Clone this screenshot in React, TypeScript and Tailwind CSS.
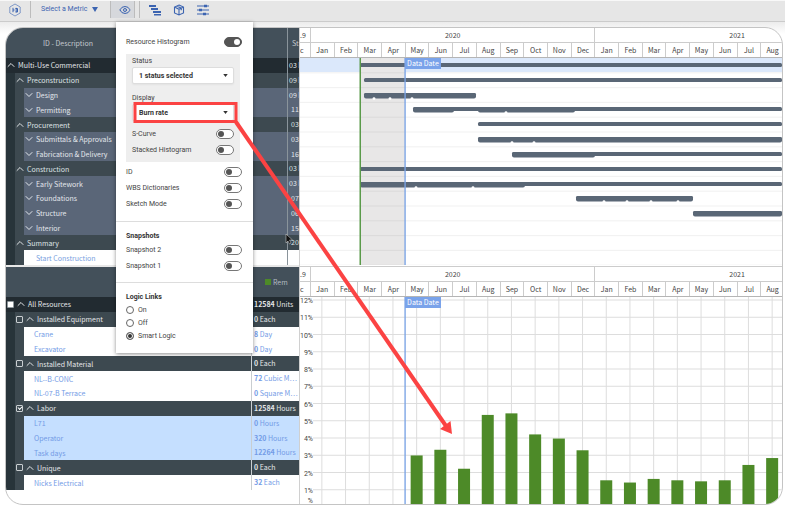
import { ChevronDown, ChevronUp, Eye } from 'lucide-react';
import { useState } from 'react';
import type { ReactNode } from 'react';

const MONTHS = ['Jan', 'Feb', 'Mar', 'Apr', 'May', 'Jun', 'Jul', 'Aug', 'Sep', 'Oct', 'Nov', 'Dec'];

type WbsRow = { name: string; level: number; date?: string; leaf?: boolean };

const WBS: WbsRow[] = [
	{ name: 'Multi-Use Commercial', level: 0, date: '03 M' },
	{ name: 'Preconstruction', level: 1, date: '09 M' },
	{ name: 'Design', level: 2, date: '09 M' },
	{ name: 'Permitting', level: 2, date: '11' },
	{ name: 'Procurement', level: 1, date: '03' },
	{ name: 'Submittals & Approvals', level: 2, date: '03' },
	{ name: 'Fabrication & Delivery', level: 2, date: '16' },
	{ name: 'Construction', level: 1, date: '03 M' },
	{ name: 'Early Sitework', level: 2, date: '03 M' },
	{ name: 'Foundations', level: 2, date: '07' },
	{ name: 'Structure', level: 2, date: '06' },
	{ name: 'Interior', level: 2, date: '15' },
	{ name: 'Summary', level: 1, date: '20' },
	{ name: 'Start Construction', level: 2, leaf: true }
];

type ResourceRow = {
	name: string;
	level: number;
	amount: string;
	unit: string;
	checked?: boolean;
	selected?: boolean;
};

const RESOURCES: ResourceRow[] = [
	{ name: 'All Resources', level: 0, amount: '12584', unit: 'Units' },
	{ name: 'Installed Equipment', level: 1, amount: '0', unit: 'Each' },
	{ name: 'Crane', level: 2, amount: '8', unit: 'Day' },
	{ name: 'Excavator', level: 2, amount: '0', unit: 'Day' },
	{ name: 'Installed Material', level: 1, amount: '0', unit: 'Each' },
	{ name: 'NL--B-CONC', level: 2, amount: '72', unit: 'Cubic M…' },
	{ name: 'NL-07-B Terrace', level: 2, amount: '0', unit: 'Square M…' },
	{ name: 'Labor', level: 1, amount: '12584', unit: 'Hours', checked: true },
	{ name: 'L71', level: 2, amount: '0', unit: 'Hours', selected: true },
	{ name: 'Operator', level: 2, amount: '320', unit: 'Hours', selected: true },
	{ name: 'Task days', level: 2, amount: '12264', unit: 'Hours', selected: true },
	{ name: 'Unique', level: 1, amount: '0', unit: 'Each' },
	{ name: 'Nicks Electrical', level: 2, amount: '32', unit: 'Each' }
];

// x positions are in timeline units, TIMELINE_WIDTH units across
const TIMELINE_WIDTH = 482;
const MONTH_WIDTH = 23.7;

type Bar = { y: number; from: number; to: number; thick?: [number, number][]; notches?: number[] };

const BARS: Bar[] = [
	{ y: 5, from: 60, to: 482 },
	{ y: 20, from: 64, to: 482 },
	{ y: 35, from: 64, to: 176, thick: [[64, 176]], notches: [74, 90, 112] },
	{ y: 49, from: 113, to: 482, thick: [[113, 154], [178, 275]], notches: [206] },
	{ y: 64, from: 178, to: 482 },
	{ y: 79, from: 178, to: 482, thick: [[178, 482]], notches: [212, 234] },
	{ y: 94, from: 212, to: 482, thick: [[212, 295]] },
	{ y: 109, from: 60, to: 482 },
	{ y: 124, from: 60, to: 482, thick: [[60, 225]], notches: [116, 173] },
	{ y: 138, from: 276, to: 393, thick: [[276, 393]], notches: [304, 327, 351, 378] },
	{ y: 153, from: 393, to: 482, thick: [[393, 482]] }
];

// percent burned per month, April 2020 onwards
const BURN = [0.1, 2.93, 3.26, 2.16, 5.28, 5.37, 4.15, 3.91, 3.23, 1.49, 1.36, 1.57, 1.49, 1.43, 1.49, 2.38, 2.78];

const pct = (x: number) => `${(x / TIMELINE_WIDTH) * 100}%`;

function TimelineHeader() {
	return (
		<div className="flex h-[30px] text-[7px] leading-[14px] text-[#444]">
			<div className="w-[10px] shrink-0 overflow-hidden border-b border-[#b5b5b5]">
				<div className="h-[15px] border-b border-[#ccc]">.9</div>
				<div>c</div>
			</div>
			<div className="min-w-0 flex-1 overflow-hidden border-b border-[#b5b5b5]">
				<div className="grid w-[120.5%] grid-cols-24 text-center">
					<div className="col-span-12 h-[15px] border-b border-l border-[#ccc]">2020</div>
					<div className="col-span-12 h-[15px] border-b border-l border-[#ccc]">2021</div>
					{[...MONTHS, ...MONTHS.slice(0, 8)].map((month, i) => (
						<div key={i} className="h-[15px] border-l border-[#ccc]">
							{month}
						</div>
					))}
				</div>
			</div>
		</div>
	);
}

function DataDate() {
	return (
		<span className="absolute top-0 left-[21.8%] h-[11px] bg-[#7aa3ea] px-[2px] text-[7px] leading-[11px] whitespace-nowrap text-white">
			Data Date
		</span>
	);
}

function Gantt() {
	return (
		<div className="relative h-[207px]">
			<svg className="block h-full w-full" aria-hidden="true">
				<rect width="100%" height="14" fill="#dbe8fb" />
				<rect x={pct(61)} width={pct(44)} height="100%" fill="#e8e7e7" />
				{WBS.map((row, i) => (
					<line key={row.name} x1="0" x2="100%" y1={(i + 1) * 14.8} y2={(i + 1) * 14.8} stroke="#000" opacity="0.05" />
				))}
				{BARS.map((bar) => (
					<g key={bar.y} fill="#5a6776">
						<rect x={pct(bar.from)} y={bar.y} width={pct(bar.to - bar.from)} height="4" rx="1.5" />
						{bar.thick?.map(([from, to]) => (
							<rect key={from} x={pct(from)} y={bar.y} width={pct(to - from)} height="5.5" rx="2" />
						))}
						{bar.notches?.map((x) => (
							<circle key={x} cx={pct(x)} cy={bar.y + 5.6} r="1.4" fill="#fff" />
						))}
					</g>
				))}
				<rect x={pct(59.5)} width="1.5" height="100%" fill="#5a9a4a" />
				<rect x={pct(104.3)} width="1.6" height="100%" fill="#7aa3e4" opacity="0.85" />
			</svg>
			<DataDate />
		</div>
	);
}

function Histogram() {
	const step = 17.25;
	const zero = 210;
	return (
		<div className="relative h-[207px]">
			<svg className="block h-full w-full" role="img" aria-label="Burn rate per month">
				{Array.from({ length: 12 }, (_, i) => (
					<line key={i} x1="13" x2="100%" y1={zero - (i + 1) * step} y2={zero - (i + 1) * step} stroke="#ddd" />
				))}
				{Array.from({ length: 20 }, (_, i) => (
					<line
						key={i}
						x1={pct(10 + (i + 0.5) * MONTH_WIDTH)}
						x2={pct(10 + (i + 0.5) * MONTH_WIDTH)}
						y1="0"
						y2="100%"
						stroke="#ddd"
					/>
				))}
				{BURN.map((value, i) => (
					<rect
						key={i}
						x={pct(10 + (i + 3.5) * MONTH_WIDTH - 6)}
						y={zero - value * step - 1}
						width={pct(12)}
						height={value * step + 1}
						fill="#4d8a28"
					/>
				))}
				<g textAnchor="end" className="fill-[#444] font-['Roboto',sans-serif] text-[7px]">
					{Array.from({ length: 12 }, (_, i) => (
						<text key={i} x="13" y={zero - (i + 1) * step + 3}>
							{i + 1}%
						</text>
					))}
					<text x="13" y="206">
						%
					</text>
				</g>
				<rect x={pct(104.3)} width="1.6" height="100%" fill="#7aa3e4" opacity="0.85" />
			</svg>
			<DataDate />
		</div>
	);
}

function Caret({ name, open = true }: { name: string; open?: boolean }) {
	const Icon = open ? ChevronUp : ChevronDown;
	return (
		<button type="button" aria-label={`Toggle ${name}`} className="flex w-2 shrink-0 justify-center">
			<Icon className="size-3 shrink-0" />
		</button>
	);
}

function WbsTable() {
	return (
		<table className="block w-full text-[7px] leading-[14px]">
			<thead className="block">
				<tr className="flex h-[30px] items-stretch bg-[#43505a] text-[#c3c9ce]">
					<th className="flex-1 pl-[37px] text-left leading-[30px] font-normal">ID - Description</th>
					<th className="w-[12px] overflow-hidden border-l border-[#8a949b] pl-1 text-left leading-[30px] font-normal">
						St
					</th>
				</tr>
			</thead>
			<tbody className="grid h-[207px] auto-rows-fr">
				{WBS.map((row) => {
					const tone = row.leaf
						? 'bg-white text-[#7b9fe0]'
						: row.level === 0
							? 'bg-[#222b31] text-[#e3e6e8]'
							: row.level === 1
								? 'bg-[#3d4950] text-[#dfe3e5]'
								: 'bg-[#5a6678] text-[#e3e7ec]';
					return (
						<tr key={row.name} className={`flex min-h-0 bg-[#28343a] ${row.level > 0 ? 'pl-[9px]' : ''}`}>
							<td
								className={`flex min-w-0 flex-1 items-center gap-[3px] pl-[1px] ${tone} ${row.level === 2 ? 'border-l-[9px] border-[#3d4950]' : ''}`}
							>
								{row.leaf ? <span className="w-2 shrink-0" /> : <Caret name={row.name} open={row.level < 2} />}
								{row.name}
							</td>
							<td
								className={`w-[12px] shrink-0 overflow-hidden border-l border-[#8a949b] whitespace-nowrap ${tone} ${row.date && row.date.length > 2 ? 'pl-[1px]' : 'pl-[3px]'}`}
							>
								{row.date}
							</td>
						</tr>
					);
				})}
			</tbody>
		</table>
	);
}

function ResourceTable() {
	return (
		<table className="block w-full text-[7px] leading-[14px]">
			<thead className="block">
				<tr className="flex h-[30px] bg-[#43505a] text-[#b3bbc1]">
					<th className="flex-1" />
					<th className="flex w-[48px] items-center gap-[2px] pl-[14px] font-normal">
						<span className="size-[6px] bg-[#4d8a28]" />
						Rem
					</th>
				</tr>
			</thead>
			<tbody className="grid h-[193px] auto-rows-fr">
				{RESOURCES.map((row) => {
					const tone = row.selected
						? 'bg-[#c5dfff] text-[#739be6]'
						: row.level === 0
							? 'bg-[#222b31] text-[#e3e6e8]'
							: row.level === 1
								? 'bg-[#3d4950] text-[#e3e6e8]'
								: 'bg-white text-[#739be6]';
					return (
						<tr key={row.name} className={`flex min-h-0 bg-[#28343a] ${row.level > 0 ? 'pl-[9px]' : ''}`}>
							<td
								className={`flex min-w-0 flex-1 items-center ${tone} ${row.level === 2 ? 'border-l-[9px] border-[#3d4950] pl-[10px]' : 'gap-[3px] pl-[1px]'}`}
							>
								{row.level < 2 && (
									<>
										<input
											type="checkbox"
											aria-label={row.name}
											defaultChecked={row.checked}
											className={`relative size-[7px] appearance-none rounded-[1px] border checked:after:absolute checked:after:top-0 checked:after:left-[1px] checked:after:h-[3px] checked:after:w-1 checked:after:-rotate-45 checked:after:border-b checked:after:border-l checked:after:border-white ${row.level === 0 ? 'border-[#8f989d] bg-white' : 'border-[#c9ced1]'}`}
										/>
										<Caret name={row.name} />
									</>
								)}
								{row.name}
							</td>
							<td className={`w-[48px] shrink-0 overflow-hidden border-l border-[#c9ced1] pl-[2px] whitespace-nowrap ${tone}`}>
								<b>{row.amount}</b> {row.unit}
							</td>
						</tr>
					);
				})}
			</tbody>
		</table>
	);
}

function Toggle({ label, defaultChecked }: { label: string; defaultChecked?: boolean }) {
	return (
		<label className="flex h-4 items-center justify-between">
			{label}
			<input
				type="checkbox"
				role="switch"
				defaultChecked={defaultChecked}
				className="relative h-[10px] w-[18px] appearance-none rounded-full border border-[#777] bg-white before:absolute before:top-[1px] before:left-[1px] before:size-[6px] before:rounded-full before:bg-[#555] checked:border-[#555] checked:bg-[#555] checked:before:left-[9px] checked:before:bg-white"
			/>
		</label>
	);
}

function Select({ label, options }: { label: string; options: string[] }) {
	return (
		<label className="block leading-3">
			{label}
			<span className="relative block">
				<select className="block h-[17px] w-full appearance-none rounded-[2px] border border-[#ddd] bg-white pl-[6px] text-[7px] font-bold text-[#333] shadow-xs">
					{options.map((option) => (
						<option key={option}>{option}</option>
					))}
				</select>
				<svg viewBox="0 0 6 4" className="pointer-events-none absolute top-[7px] right-[6px] h-[3px] w-[5px]">
					<path d="M0 0h6L3 4z" fill="#333" />
				</svg>
			</span>
		</label>
	);
}

function Section({ title, children }: { title: string; children: ReactNode }) {
	return (
		<section className="border-t border-[#ddd] pt-2 pr-[11px] pl-[10px]">
			<h2 className="font-bold text-[#333]">{title}</h2>
			{children}
		</section>
	);
}

function ViewMenu() {
	const [links, setLinks] = useState('Smart Logic');

	return (
		<div className="absolute top-[22px] left-[116px] z-10 h-[331px] w-[137px] bg-white pt-3 font-['Roboto',sans-serif] text-[7px] leading-3 text-[#444] shadow-[0_1px_4px_rgba(0,0,0,0.45)]">
			<div className="h-[187px] pr-[11px] pl-[10px]">
				<Toggle label="Resource Histogram" defaultChecked />
				<div className="mt-1 mr-[2px] mb-[2px] h-[108px] bg-[#eee] pt-[1px] pr-[6px] pl-[6px]">
					<Select label="Status" options={['1 status selected']} />
					<div className="mt-2 mb-[5px]">
						<Select label="Display" options={['Burn rate', 'Units', 'Cost']} />
					</div>
					<Toggle label="S-Curve" />
					<Toggle label="Stacked Histogram" />
				</div>
				<Toggle label="ID" />
				<Toggle label="WBS Dictionaries" />
				<Toggle label="Sketch Mode" />
			</div>
			<Section title="Snapshots">
				<div className="pb-2">
					<Toggle label="Snapshot 2" />
					<Toggle label="Snapshot 1" />
				</div>
			</Section>
			<Section title="Logic Links">
				{['On', 'Off', 'Smart Logic'].map((option) => (
					<label key={option} className="flex h-[13px] items-center gap-1">
						<input
							type="radio"
							name="links"
							checked={links === option}
							onChange={() => setLinks(option)}
							className="size-2 appearance-none rounded-full border border-[#666] checked:bg-[#333] checked:shadow-[inset_0_0_0_1px_#fff]"
						/>
						{option}
					</label>
				))}
			</Section>
		</div>
	);
}

function Toolbar() {
	return (
		<header className="flex h-[22px] items-stretch border-t border-b border-t-[#f8f8f8] border-b-[#cbcbcb] bg-[#e6e6e6] pb-[3px] text-[#3c64b1]">
			<button type="button" aria-label="Home" className="flex w-[30px] items-center justify-center">
				<svg viewBox="0 0 14 14" className="size-[14px]" fill="none" stroke="currentColor">
					<path d="M7 1l5.200 3v6L7 13l-5.200-3V4z" strokeWidth="0.6" />
					<path d="M5 4.800v4.400M8.200 4.800v4.400M5 7h1.500M7.500 5.500h2v3.500h-2" strokeWidth="1" />
				</svg>
			</button>
			<button
				type="button"
				className="flex w-[80px] items-center gap-[5px] border-l border-[#bcbcbc] pl-[10px] font-['Roboto',sans-serif] text-[7px]"
			>
				Select a Metric
				<svg viewBox="0 0 6 5" className="h-[5px] w-[6px]">
					<path d="M0 0h6L3 5z" fill="currentColor" />
				</svg>
			</button>
			<button
				type="button"
				aria-label="View options"
				className="flex w-[25px] items-center justify-center border-r border-l border-[#bcbcbc] bg-[#d6d8dc] pl-[4px]"
			>
				<Eye className="size-3" />
			</button>
			<div className="ml-[4px] flex items-center gap-3 border-l border-[#bcbcbc] pl-[9px]">
				<button type="button" aria-label="Gantt view">
					<svg viewBox="0 0 12 12" className="size-3" fill="currentColor">
						<path d="M0 1h7v2H0zM2 4h7v2H2zM4 7h8v2H4zM5 10h7v1.500H5z" />
					</svg>
				</button>
				<button type="button" aria-label="Model view">
					<svg viewBox="0 0 12 12" className="size-3" fill="none" stroke="currentColor" strokeWidth="1.1">
						<path d="M6 1l4.500 2v6L6 11 1.500 9V3zM1.500 3L6 5.300 10.500 3M6 5.300V11M3.700 2L8.300 4.200v2" />
					</svg>
				</button>
				<button type="button" aria-label="Filters">
					<svg viewBox="0 0 12 12" className="size-3" fill="none" stroke="currentColor">
						<path d="M0 2h12M0 6h12M0 10h12" />
						<path d="M7 2h3M2 6h3M6 10h3" strokeWidth="2.600" />
					</svg>
				</button>
			</div>
		</header>
	);
}

export default function App() {
	return (
		<main className="relative overflow-hidden bg-white font-['Noto_Sans_CJK_SC',sans-serif]">
			<Toolbar />
			<div className="bg-linear-to-b from-[#ececec] to-white to-[12px] pt-[5px] pr-[2px] pl-[5px]">
				<div className="flex overflow-hidden rounded-[18px] border border-[#c4c4c4] bg-white">
					<div className="w-[294px] shrink-0 border-r border-[#d0d0d0]">
						<WbsTable />
						<div className="h-[2px] bg-[#e8e8e8]" />
						<ResourceTable />
					</div>
					<div className="min-w-0 flex-1">
						<TimelineHeader />
						<Gantt />
						<div className="h-[2px] border-b border-[#ccc]" />
						<TimelineHeader />
						<Histogram />
					</div>
				</div>
			</div>
			<ViewMenu />

			<svg className="pointer-events-none absolute top-0 left-0 z-20 h-[505px] w-[785px]" aria-hidden="true">
				<path d="M286 234v9l2-2 1.500 3 1.500-1-1.500-3h3z" fill="#111" stroke="#ddd" strokeWidth="0.5" />
				<g stroke="#fb4343" fill="none">
					<rect x="135" y="103.500" width="101" height="18" strokeWidth="3" />
					<path d="M236 122L446 426" strokeWidth="4" />
				</g>
				<path d="M452 434l-12-5 10.500-8z" fill="#fb4343" />
			</svg>
		</main>
	);
}
